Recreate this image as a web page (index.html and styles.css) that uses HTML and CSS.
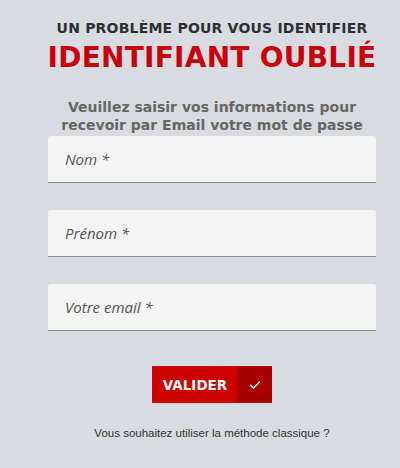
FILE: index.html
```html
<!DOCTYPE html>
<html lang="fr">
<head>
<meta charset="utf-8">
<link rel="stylesheet" href="styles.css">
</head>
<body>
<div class="wrap">
  <h2 class="kicker">UN PROBLÈME POUR VOUS IDENTIFIER</h2>
  <h1 class="title">IDENTIFIANT OUBLIÉ</h1>
  <p class="intro">Veuillez saisir vos informations pour recevoir par Email votre mot de passe</p>
  <form class="form">
    <input class="field" type="text" placeholder="Nom *">
    <input class="field" type="text" placeholder="Prénom *">
    <input class="field" type="email" placeholder="Votre email *">
    <div class="actions">
      <button class="btn" type="button"><span class="btn-label">VALIDER</span><span class="btn-icon"><svg width="12" height="10" viewBox="0 0 12 10"><path d="M1.5 5.2 L4.5 8 L10.5 2" fill="none" stroke="#fff" stroke-width="1.4" stroke-linecap="round" stroke-linejoin="round"/></svg></span></button>
    </div>
  </form>
  <p class="alt">Vous souhaitez utiliser la méthode classique ?</p>
</div>
</body>
</html>
```
FILE: styles.css
```css
html, body {
  margin: 0;
  padding: 0;
  background: #d8dce0;
}
body {
  font-family: "DejaVu Sans", sans-serif;
}
.wrap {
  width: 328px;
  margin-left: 48px;
  text-align: center;
  padding-top: 18px;
}
.kicker {
  margin: 0 -20px;
  font-size: 14px;
  line-height: 20px;
  font-weight: 700;
  letter-spacing: 0.2px;
  white-space: nowrap;
  color: #2f3033;
}
.title {
  margin: 4px -30px 0;
  font-size: 28px;
  line-height: 32px;
  font-weight: 700;
  letter-spacing: 0.25px;
  white-space: nowrap;
  color: #c8000b;
}
.intro {
  margin: 24px 0 0;
  font-size: 14px;
  line-height: 18px;
  font-weight: 700;
  color: #666;
}
.form {
  display: flex;
  flex-direction: column;
  gap: 27px;
  margin-top: 2px;
}
.field {
  display: block;
  box-sizing: border-box;
  width: 328px;
  height: 47px;
  margin: 0;
  padding: 0 17px;
  border: none;
  border-bottom: 1px solid #8c8c8c;
  border-radius: 3px 3px 0 0;
  background: #f4f4f4;
  font-family: "Open Sans", sans-serif;
  font-style: italic;
  font-size: 15px;
  color: #555;
  outline: none;
}
.field::placeholder {
  color: #555;
  opacity: 1;
}
.actions {
  display: flex;
  justify-content: center;
  margin-top: 8px;
}
.btn {
  display: flex;
  align-items: stretch;
  height: 37px;
  padding: 0;
  border: none;
  background: #cc0000;
  cursor: pointer;
}
.btn-label {
  display: flex;
  align-items: center;
  padding: 0 10px 0 11px;
  font-family: "DejaVu Sans", sans-serif;
  font-weight: 700;
  font-size: 13.5px;
  color: #fff;
}
.btn-icon {
  display: flex;
  align-items: center;
  justify-content: center;
  width: 35px;
  background: #a80000;
}
.alt {
  margin: 24px 0 0;
  font-family: "Liberation Sans", sans-serif;
  font-size: 11.5px;
  color: #333;
}
```
